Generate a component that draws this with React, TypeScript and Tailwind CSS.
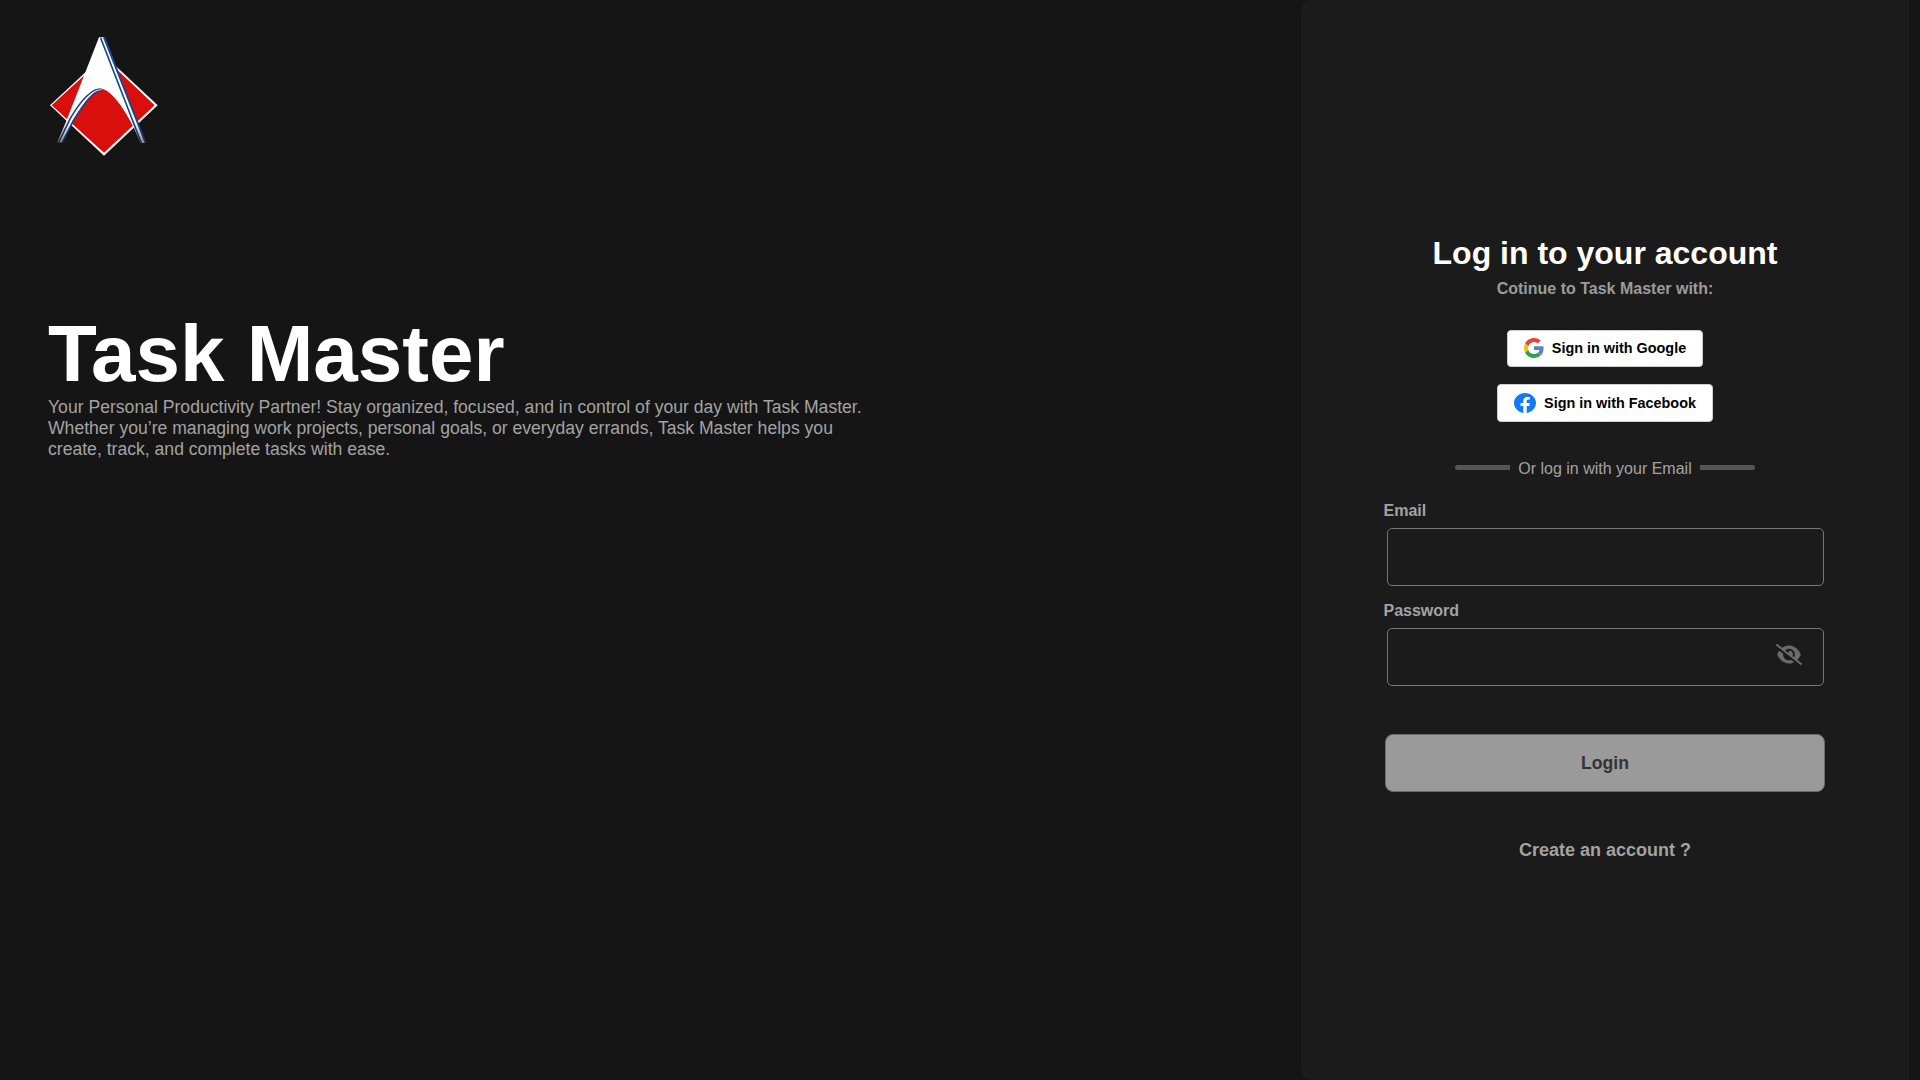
import { FaEyeSlash } from "react-icons/fa6";

function Logo() {
  return (
    <svg viewBox="0 0 390 420" className="block h-[140px] w-[130px]" aria-label="Task Master logo">
      <defs>
        <linearGradient id="stripe" gradientUnits="userSpaceOnUse" x1="0" y1="290" x2="0" y2="354">
          <stop offset="0" stopColor="#17448c" />
          <stop offset="1" stopColor="#17304f" />
        </linearGradient>
        <linearGradient id="blade" gradientUnits="userSpaceOnUse" x1="0" y1="290" x2="0" y2="354">
          <stop offset="0" stopColor="#fff" />
          <stop offset="1" stopColor="#8a8a8a" />
        </linearGradient>
      </defs>
      <polygon points="30,241 192,90 353,241 192,392" fill="#fff" />
      <polygon points="35,241 192,97 344,241 192,383" fill="#d80f0d" />
      <path
        d="M177 37 H194 L317 354 H302 L279 303 C252 250 212 193 185 192 C160 193 130 234 98 290 L66 352 H52 L78 290 Z"
        fill="url(#blade)"
      />
      <path d="M182 39 L304 354" stroke="url(#stripe)" strokeWidth="5" fill="none" />
      <path d="M192 37 L317 354" stroke="url(#stripe)" strokeWidth="6" fill="none" />
      <path d="M184 192 C158 190 124 224 91 280 L56 352" stroke="url(#stripe)" strokeWidth="5" fill="none" />
      <path d="M184 195 C160 199 132 234 100 287 L67 352" stroke="url(#stripe)" strokeWidth="5" fill="none" />
      <path d="M184 194 C158 194 128 230 95 285 L61 352" stroke="url(#blade)" strokeWidth="2.5" fill="none" />
    </svg>
  );
}

function GoogleIcon() {
  return (
    <svg viewBox="0 0 48 48" className="mb-px block size-5">
      <path fill="#EA4335" d="M24 9.5c3.54 0 6.71 1.22 9.21 3.6l6.85-6.85C35.9 2.38 30.47 0 24 0 14.62 0 6.51 5.38 2.56 13.22l7.98 6.19C12.43 13.72 17.74 9.5 24 9.5z" />
      <path fill="#5B83C8" d="M46.98 24.55c0-1.57-.15-3.09-.38-4.55H24v9.02h12.94c-.58 2.96-2.26 5.48-4.78 7.18l7.73 6c4.51-4.18 7.09-10.36 7.09-17.65z" />
      <path fill="#FBBC05" d="M10.53 28.59c-.48-1.45-.76-2.99-.76-4.59s.27-3.14.76-4.59l-7.98-6.19C.92 16.46 0 20.12 0 24c0 3.88.92 7.54 2.56 10.78l7.97-6.19z" />
      <path fill="#2FA34F" d="M24 48c6.48 0 11.93-2.13 15.89-5.81l-7.73-6c-2.15 1.45-4.92 2.3-8.16 2.3-6.26 0-11.57-4.22-13.47-9.91l-7.98 6.19C6.51 42.62 14.62 48 24 48z" />
    </svg>
  );
}

function FacebookIcon() {
  return (
    <svg viewBox="0 0 24 24" preserveAspectRatio="none" className="block h-5 w-[22px]">
      <path
        fill="#1479f4"
        d="M24 12.073c0-6.627-5.373-12-12-12s-12 5.373-12 12c0 5.99 4.388 10.954 10.125 11.854v-8.385H7.078v-3.47h3.047V9.43c0-3.007 1.792-4.669 4.533-4.669 1.312 0 2.686.235 2.686.235v2.953H15.83c-1.491 0-1.956.925-1.956 1.874v2.25h3.328l-.532 3.47h-2.796v8.385C19.612 23.027 24 18.062 24 12.073z"
      />
    </svg>
  );
}

export default function App() {
  return (
    <div className="flex h-screen w-full overflow-hidden bg-[#151515] font-['Liberation_Sans',sans-serif]">
      <main className="w-[1301px] shrink-0">
        <div className="pt-[25px] pl-10">
          <Logo />
        </div>
        <div className="mt-[143px] ml-12 w-[830px]">
          <h1 className="text-[80px] leading-[92px] font-bold text-white">Task Master</h1>
          <p className="-mt-[3px] text-[17.6px] leading-[21px] text-[#a3a3a3]">
            Your Personal Productivity Partner! Stay organized, focused, and in control of your day with Task Master.
            <br />
            Whether you’re managing work projects, personal goals, or everyday errands, Task Master helps you
            <br />
            create, track, and complete tasks with ease.
          </p>
        </div>
      </main>

      <section className="flex w-[608px] shrink-0 flex-col items-center rounded-l-[10px] bg-[#1b1b1b] text-[#a3a3a3]">
        <h2 className="mt-[235px] text-[32px] leading-[37px] font-bold text-white">Log in to your account</h2>
        <p className="mt-2 text-base leading-[18px] font-bold text-[#9b9b9b]">Cotinue to Task Master with:</p>

        <button className="mt-8 flex h-[37px] w-[196px] items-center justify-center gap-2 rounded border border-[#cfcfcf] bg-white text-[14.4px] font-bold text-black">
          <GoogleIcon />
          Sign in with Google
        </button>
        <button className="mt-[17px] flex h-[38px] w-[216px] items-center justify-center gap-2 rounded border border-[#cfcfcf] bg-white text-[14.4px] font-bold text-black">
          <FacebookIcon />
          <span className="pt-px">Sign in with Facebook</span>
        </button>

        <div className="mt-[38px] flex h-[18px] w-[300px] items-start justify-between">
          <span className="mt-[5px] h-[5px] w-[55px] rounded-l bg-[#555]" />
          <span className="text-base leading-[18px]">Or log in with your Email</span>
          <span className="mt-[5px] h-[5px] w-[55px] rounded-r bg-[#555]" />
        </div>

        <form className="mt-6 flex w-[442px] flex-col">
          <label className="-ml-[0.5px] text-base leading-[18px] font-bold">Email</label>
          <div className="mt-2 ml-[3px] h-[58px] w-[437px] rounded-[5px] border border-[#767676]" />
          <label className="-ml-[0.5px] mt-4 text-base leading-[18px] font-bold">Password</label>
          <div className="mt-2 ml-[3px] flex h-[58px] w-[437px] justify-end rounded-[5px] border border-[#767676] pt-[15px] pr-[21px]">
            <FaEyeSlash className="h-[21px] w-[26px] text-[#6b6b6b]" />
          </div>
          <button
            type="button"
            className="mt-12 ml-px h-[58px] w-[440px] rounded-lg border border-[#6b6b6b] bg-[#9a9a9a] text-[17.6px] font-bold text-[#333]"
          >
            Login
          </button>
        </form>
        <a className="mt-12 text-[18px] leading-5 font-bold">Create an account ?</a>
      </section>
    </div>
  );
}
